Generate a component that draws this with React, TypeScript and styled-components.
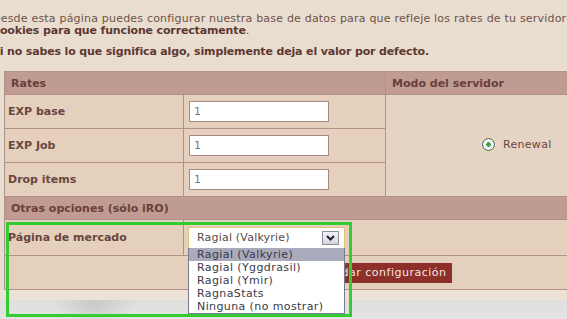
import React from "react";
import styled, { createGlobalStyle } from "styled-components";

const Global = createGlobalStyle`
  html, body { margin: 0; padding: 0; }
  body {
    width: 567px; height: 319px; overflow: hidden;
    background: #e9ddcf;
    font-family: "DejaVu Sans", Verdana, sans-serif;
    font-size: 11px;
    color: #6a4640;
  }
`;

const Page = styled.div`
  position: relative;
  width: 567px;
  height: 319px;
  overflow: hidden;
`;

const Intro = styled.p<{ $bold?: boolean }>`
  margin: 0 0 0 -8px;
  white-space: nowrap;
  line-height: 12px;
  letter-spacing: ${(p) => (p.$bold ? "-0.15px" : "0.2px")};
  font-weight: ${(p) => (p.$bold ? "bold" : "normal")};
  color: ${(p) => (p.$bold ? "#5e3833" : "#6e524a")};
  b { color: #5e3833; letter-spacing: -0.15px; }
`;

const IntroBlock = styled.div`
  padding-top: 13px;
  display: flex;
  flex-direction: column;
  gap: 9px;
`;

const Table = styled.table`
  margin: 13px 0 0 4px;
  width: 760px;
  border-collapse: collapse;
  border: 1px solid #b0928a;
  background: #e4d0bc;
`;

const HeadCell = styled.th`
  height: 22px;
  padding: 0 0 0 6px;
  text-align: left;
  background: #bf9b92;
  color: #6a3f3b;
  font-weight: bold;
  border: 1px solid #b0928a;
`;

const Label = styled.td<{ $tall?: boolean }>`
  width: 175px;
  height: ${(p) => (p.$tall ? "35px" : "33px")};
  padding: 0 0 0 3px;
  font-weight: bold;
  color: #6a4640;
  border: 1px solid #b0928a;
`;

const Field = styled.td`
  width: 196px;
  padding: 0 0 0 5px;
  border: 1px solid #b0928a;
`;

const ModeCell = styled.td`
  background: #e5d4c3;
  border: 1px solid #b0928a;
  padding-left: 96px;
`;

const TextInput = styled.input`
  box-sizing: border-box;
  width: 140px;
  height: 21px;
  margin: 0;
  border: 1px solid #a88a82;
  background: #fff;
  font-family: "DejaVu Sans", Verdana, sans-serif;
  font-size: 11px;
  color: #777;
  padding: 0 4px;
  outline: none;
`;

const RadioLabel = styled.label`
  display: inline-flex;
  align-items: center;
  gap: 8px;
  color: #6a4640;
  font-size: 11px;
  letter-spacing: 0.3px;
`;

const RadioDot = styled.span`
  box-sizing: border-box;
  width: 13px;
  height: 13px;
  border-radius: 50%;
  border: 1px solid #3c5a82;
  background: radial-gradient(circle, #3fa046 0 2px, #f2f2ee 2.5px);
  box-shadow: 0 0 0 1px #f4e6a0;
`;

const SelectCell = styled.td`
  padding: 0 0 0 4px;
  border: 1px solid #b0928a;
  border-left: none;
`;

const Select = styled.div`
  box-sizing: border-box;
  width: 157px;
  height: 22px;
  border: 1px solid #e2c27e;
  background: #fff;
  display: flex;
  align-items: center;
  justify-content: space-between;
  padding: 0 5px 0 8px;
  color: #5a4a48;
  font-size: 11px;
  letter-spacing: 0.2px;
`;

const Arrow = styled.span`
  box-sizing: border-box;
  width: 17px;
  height: 14px;
  border: 1px solid #8d8d9a;
  background: linear-gradient(#f4f4f8, #d6d6e0);
  display: flex;
  align-items: center;
  justify-content: center;
`;

const ButtonCell = styled.td`
  height: 33px;
  padding: 0 0 0 303px;
  border: 1px solid #b0928a;
`;

const SaveButton = styled.button`
  height: 20px;
  border: none;
  margin: 0;
  background: #8e2f29;
  color: #f4e6e0;
  font-family: "DejaVu Sans", Verdana, sans-serif;
  font-size: 11px;
  padding: 0 5px;
  letter-spacing: 0.5px;
`;

const BottomBand = styled.div`
  height: 10px;
  background: #ece2d7;
`;

const Shadow = styled.div`
  height: 30px;
  background:
    radial-gradient(ellipse 40px 22px at 95px 4px, #c9c9c9, rgba(200, 200, 200, 0)),
    linear-gradient(#dedede, #e8e8e8);
`;

const Dropdown = styled.ul`
  position: absolute;
  left: 188px;
  top: 248px;
  width: 157px;
  box-sizing: border-box;
  margin: 0;
  padding: 0;
  list-style: none;
  background: #fff;
  border: 1px solid #7a7a8a;
  border-top: none;
`;

const Option = styled.li<{ $active?: boolean }>`
  height: 13px;
  line-height: 13px;
  padding-left: 8px;
  font-size: 11px;
  letter-spacing: 0.4px;
  color: #3a3a4a;
  white-space: nowrap;
  background: ${(p) => (p.$active ? "#a9abbc" : "#fff")};
`;

const Highlight = styled.div`
  position: absolute;
  left: 6px;
  top: 222px;
  width: 346px;
  height: 95px;
  box-sizing: border-box;
  border: 3px solid #33cc33;
  pointer-events: none;
`;

const options = [
  "Ragial (Valkyrie)",
  "Ragial (Yggdrasil)",
  "Ragial (Ymir)",
  "RagnaStats",
  "Ninguna (no mostrar)",
];

export default function App() {
  return (
    <Page>
      <Global />
      <IntroBlock>
        <div>
          <Intro>Desde esta página puedes configurar nuestra base de datos para que refleje los rates de tu servidor</Intro>
          <Intro><b>Cookies para que funcione correctamente</b>.</Intro>
        </div>
        <Intro $bold>Si no sabes lo que significa algo, simplemente deja el valor por defecto.</Intro>
      </IntroBlock>
      <Table>
        <tbody>
          <tr>
            <HeadCell colSpan={2}>Rates</HeadCell>
            <HeadCell>Modo del servidor</HeadCell>
          </tr>
          <tr>
            <Label>EXP base</Label>
            <Field><TextInput defaultValue="1" /></Field>
            <ModeCell rowSpan={3}>
              <RadioLabel>
                <RadioDot />
                Renewal
              </RadioLabel>
            </ModeCell>
          </tr>
          <tr>
            <Label>EXP Job</Label>
            <Field><TextInput defaultValue="1" /></Field>
          </tr>
          <tr>
            <Label>Drop items</Label>
            <Field><TextInput defaultValue="1" /></Field>
          </tr>
          <tr>
            <HeadCell colSpan={3}>Otras opciones (sólo iRO)</HeadCell>
          </tr>
          <tr>
            <Label $tall>Página de mercado</Label>
            <SelectCell colSpan={2}>
              <Select>
                <span>Ragial (Valkyrie)</span>
                <Arrow>
                  <svg width="9" height="6" viewBox="0 0 9 6">
                    <path d="M1 1 L4.5 4.5 L8 1" stroke="#202030" strokeWidth="2" fill="none" />
                  </svg>
                </Arrow>
              </Select>
            </SelectCell>
          </tr>
          <tr>
            <ButtonCell colSpan={3}>
              <SaveButton>Guardar configuración</SaveButton>
            </ButtonCell>
          </tr>
        </tbody>
      </Table>
      <BottomBand />
      <Shadow />
      <Dropdown>
        {options.map((o, i) => (
          <Option key={o} $active={i === 0}>{o}</Option>
        ))}
      </Dropdown>
      <Highlight />
    </Page>
  );
}
